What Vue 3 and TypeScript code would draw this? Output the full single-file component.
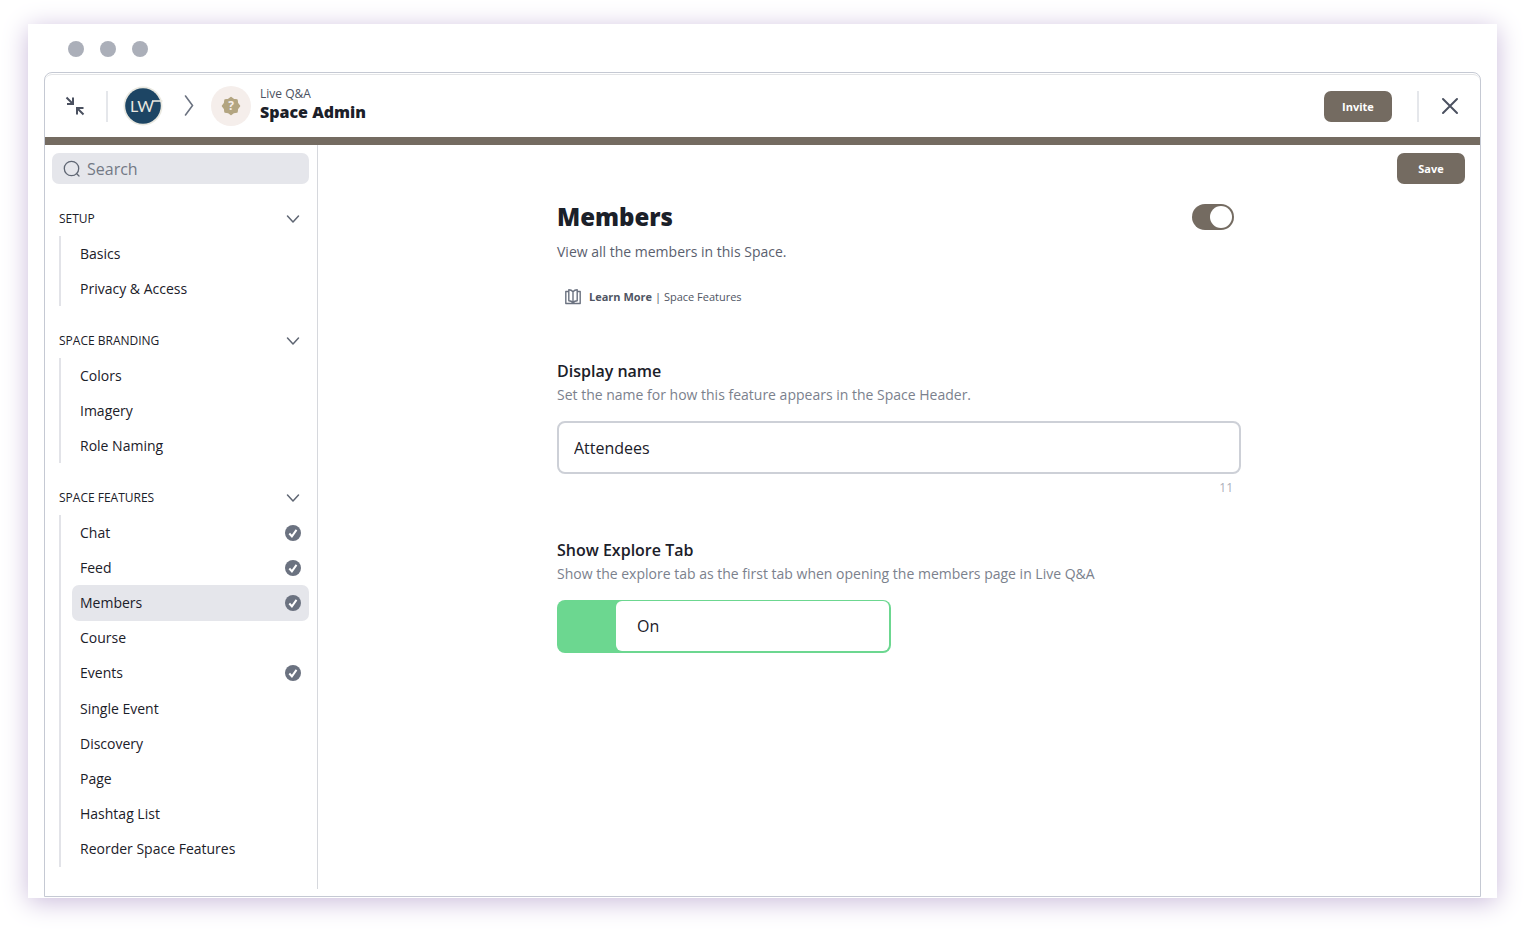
<script setup lang="ts">
import { ref } from 'vue'

interface Item {
  name: string
  enabled?: boolean
}
interface Group {
  title: string
  long?: boolean
  items: Item[]
}

const groups: Group[] = [
  { title: 'SETUP', items: [{ name: 'Basics' }, { name: 'Privacy & Access' }] },
  { title: 'SPACE BRANDING', items: [{ name: 'Colors' }, { name: 'Imagery' }, { name: 'Role Naming' }] },
  {
    title: 'SPACE FEATURES',
    long: true,
    items: [
      { name: 'Chat', enabled: true },
      { name: 'Feed', enabled: true },
      { name: 'Members', enabled: true },
      { name: 'Course' },
      { name: 'Events', enabled: true },
      { name: 'Single Event' },
      { name: 'Discovery' },
      { name: 'Page' },
      { name: 'Hashtag List' },
      { name: 'Reorder Space Features' },
    ],
  },
]

const active = ref('Members')
const closed = ref<string[]>([])
const search = ref('')
const displayName = ref('Attendees')
const featureOn = ref(true)
const exploreOn = ref(true)

function toggleGroup(title: string) {
  closed.value = closed.value.includes(title)
    ? closed.value.filter((t) => t !== title)
    : [...closed.value, title]
}
</script>

<template>
  <div class="window">
    <div class="dots"><span></span><span></span><span></span></div>
    <div class="frame">
      <header class="header">
        <button class="icon-button" type="button" aria-label="Collapse">
          <svg width="20" height="20" viewBox="0 0 20 20" fill="none" stroke="#4b5160" stroke-width="2">
            <path d="M1.5 1.5 7.5 7.5M8 1.500V8H2M18.500 18.500 12.500 12.500M12 18.500V12H18.500" />
          </svg>
        </button>
        <span class="divider"></span>
        <a class="logo" href="#" aria-label="Home">
          <svg width="40" height="40" viewBox="0 0 40 40">
            <circle cx="20" cy="20" r="19.500" fill="#e9e8e0" />
            <circle cx="20" cy="20" r="17.800" fill="#1d4564" />
            <text class="logo-text" x="7" y="26">LW</text>
            <path d="M29 15H39.500" fill="none" stroke="#e9e8e0" stroke-width="1.600" />
          </svg>
        </a>
        <svg class="crumb" width="12" height="24" viewBox="0 0 12 24" fill="none" stroke="#6b7280" stroke-width="1.600" stroke-linecap="round">
          <path d="M2.500 2 9.500 11.500 2.500 21" />
        </svg>
        <span class="space-icon">
          <svg width="20" height="20" viewBox="0 0 20 20">
            <path fill="#b3a581" stroke="#b3a581" stroke-width="1.500" stroke-linejoin="round" d="M10 1.500 12.700 3.600 16 4 16.400 7.300 18.500 10 16.400 12.700 16 16 12.700 16.400 10 18.500 7.300 16.400 4 16 3.600 12.700 1.500 10 3.600 7.300 4 4 7.300 3.600Z" />
            <text class="badge-text" x="10" y="14" text-anchor="middle">?</text>
          </svg>
        </span>
        <div class="titles">
          <span class="space-name">Live Q&amp;A</span>
          <h1>Space Admin</h1>
        </div>
        <button class="primary invite" type="button">Invite</button>
        <span class="divider"></span>
        <button class="icon-button close" type="button" aria-label="Close">
          <svg width="18" height="18" viewBox="0 0 18 18" fill="none" stroke="#4b5160" stroke-width="2" stroke-linecap="round">
            <path d="M2 2 16 16M16 2 2 16" />
          </svg>
        </button>
      </header>

      <div class="body">
        <nav class="sidebar" aria-label="Space settings">
          <label class="search">
            <svg width="18" height="18" viewBox="0 0 18 18" fill="none" stroke="#5f6673" stroke-width="1.300" stroke-linecap="round">
              <circle cx="8.500" cy="8.500" r="7.200" />
              <path d="M13.500 13.500 16 16" />
            </svg>
            <input v-model="search" type="text" placeholder="Search" aria-label="Search" />
          </label>
          <section v-for="g in groups" :key="g.title" class="group">
            <button class="group-title" type="button" @click="toggleGroup(g.title)">
              <span>{{ g.title }}</span>
              <svg width="14" height="10" viewBox="0 0 14 10" fill="none" stroke="#5f6673" stroke-width="1.500" stroke-linecap="round" stroke-linejoin="round">
                <path d="M1.500 2 7 8 12.500 2" />
              </svg>
            </button>
            <ul v-if="!closed.includes(g.title)" :class="{ long: g.long }">
              <li v-for="i in g.items" :key="i.name">
                <a href="#" :class="{ active: i.name === active }" @click.prevent="active = i.name">
                  <span>{{ i.name }}</span>
                  <svg v-if="i.enabled" width="16" height="16" viewBox="0 0 16 16">
                    <circle cx="8" cy="8" r="8" fill="#6b7280" />
                    <path d="M4.300 8.500 6.900 11.300 11.500 4.900" fill="none" stroke="#fff" stroke-width="2" />
                  </svg>
                </a>
              </li>
            </ul>
          </section>
        </nav>

        <main class="main">
          <div class="toolbar"><button class="primary" type="button">Save</button></div>
          <div class="content">
            <div class="heading">
              <h2>Members</h2>
              <input v-model="featureOn" class="switch" type="checkbox" aria-label="Enable Members" />
            </div>
            <p class="intro">View all the members in this Space.</p>
            <a class="learn" href="#">
              <svg width="16" height="16" viewBox="0 0 16 16" fill="none" stroke="#6b7280" stroke-width="1.400" stroke-linejoin="round">
                <path d="M8 2.800C7 1.500 5.500 .8 3.800 .8V11.800C5.500 11.800 7 12.500 8 13.800 9 12.500 10.500 11.800 12.200 11.800V.8C10.500 .8 9 1.500 8 2.800ZM8 2.800V13.800M3.800 2.500H.8V14.500H15.200V2.500H12.200" />
              </svg>
              <span><b>Learn More</b> | Space Features</span>
            </a>

            <div class="field">
              <label class="label" for="display-name">Display name</label>
              <p class="hint">Set the name for how this feature appears in the Space Header.</p>
              <input id="display-name" v-model="displayName" class="text-input" type="text" maxlength="20" />
              <span class="count">{{ 20 - displayName.length }}</span>
            </div>

            <div class="field">
              <span id="explore-label" class="label">Show Explore Tab</span>
              <p class="hint">Show the explore tab as the first tab when opening the members page in Live Q&amp;A</p>
              <label class="explore" :class="{ off: !exploreOn }">
                <input v-model="exploreOn" type="checkbox" aria-labelledby="explore-label" />
                <span class="explore-value">{{ exploreOn ? 'On' : 'Off' }}</span>
              </label>
            </div>
          </div>
        </main>
      </div>
    </div>
  </div>
</template>

<style>
body {
  background: #fff;
}
</style>

<style scoped>
* {
  box-sizing: border-box;
}
.window {
  margin: 24px 28px 32px;
  padding: 17px 16px 1px;
  background: #fff;
  box-shadow: 0 4px 24px #cabbdb;
  color: #1b2029;
  font-family: 'Open Sans', 'Noto Sans', sans-serif;
  font-size: 14px;
  line-height: 20px;
}
button,
input {
  font-family: inherit;
  color: inherit;
}
button {
  padding: 0;
  border: 0;
  background: none;
}
a {
  color: inherit;
  text-decoration: none;
}
h1,
h2,
p,
ul {
  margin: 0;
  padding: 0;
}
svg {
  flex: none;
  display: block;
}
.dots {
  display: flex;
  gap: 16px;
  padding: 0 24px;
  margin-bottom: 15px;
}
.dots span {
  width: 16px;
  height: 16px;
  border-radius: 50%;
  background: #abafb9;
}
.frame {
  border: 1px solid #c5c9d3;
  border-radius: 8px 8px 0 0;
}
.header {
  display: flex;
  align-items: center;
  height: 71px;
  margin-top: 1px;
  padding: 0 20px;
  border-top: 1px solid #e3e4e6;
  border-bottom: 8px solid #746b61;
  border-radius: 7px 7px 0 0;
}
.divider {
  width: 2px;
  height: 31px;
  background: #e5e7eb;
}
.header .icon-button {
  margin-right: 21px;
}
.logo {
  margin: 0 20px 0 15px;
}
.logo-text {
  font: 400 16px Lato, sans-serif;
  fill: #e9e8e0;
}
.space-icon {
  display: grid;
  place-items: center;
  width: 40px;
  height: 40px;
  margin: 0 9px 0 16px;
  border-radius: 50%;
  background: #f5eeeb;
}
.badge-text {
  font: 700 12px 'Open Sans', sans-serif;
  fill: #f5eeeb;
}
.titles {
  flex: 1;
  margin-bottom: 4px;
}
.space-name {
  display: block;
  color: #4b5160;
  font-size: 12px;
  line-height: 16px;
}
h1 {
  font-size: 16px;
  line-height: 20px;
  font-weight: 800;
}
.primary {
  width: 68px;
  height: 31px;
  border-radius: 7px;
  background: #746b61;
  color: #fff;
  font-size: 11px;
  font-weight: 700;
}
.invite {
  margin-right: 25px;
}
.header .close {
  margin: 0 1px 0 22px;
}
.body {
  display: flex;
}
.sidebar {
  flex: none;
  width: 273px;
  margin-bottom: 7px;
  padding: 8px 8px 22px 7px;
  border-right: 1px solid #d6d8dd;
}
.search {
  display: flex;
  align-items: center;
  gap: 6px;
  height: 31px;
  margin-bottom: 17px;
  padding: 0 11px;
  border-radius: 7px;
  background: #e5e6eb;
}
.search input {
  flex: 1;
  min-width: 0;
  padding: 0;
  border: 0;
  outline: 0;
  background: none;
  font-size: 16px;
}
.search input::placeholder {
  color: #737985;
  opacity: 1;
}
.group + .group {
  margin-top: 17px;
}
.group-title {
  display: flex;
  align-items: center;
  justify-content: space-between;
  width: 100%;
  height: 35px;
  padding: 0 9px 0 7px;
  font-size: 12px;
}
.group ul {
  display: grid;
  margin-left: 7px;
  padding-left: 11px;
  border-left: 2px solid #e2e3e8;
  list-style: none;
}
.group .long {
  min-height: 352px;
}
.group li {
  display: flex;
  min-height: 35px;
}
.group a {
  flex: 1;
  display: flex;
  align-items: center;
  justify-content: space-between;
  padding: 0 8px;
  border-radius: 7px;
}
.group .active {
  background: #e5e6eb;
}
.main {
  flex: 1;
  padding: 8px 15px;
}
.toolbar {
  display: flex;
  justify-content: flex-end;
}
.content {
  max-width: 684px;
  margin: 15px auto 0;
}
.heading {
  display: flex;
  align-items: center;
  justify-content: space-between;
  height: 36px;
  padding-right: 7px;
}
h2 {
  font-size: 24px;
  line-height: 36px;
  font-weight: 800;
}
.switch {
  appearance: none;
  display: flex;
  width: 42px;
  height: 26px;
  margin: 0;
  padding: 2px;
  border-radius: 13px;
  background: #abafb9;
}
.switch::before {
  content: '';
  width: 22px;
  height: 22px;
  border-radius: 50%;
  background: #fff;
}
.switch:checked {
  justify-content: flex-end;
  background: #746b61;
}
.intro {
  margin-top: 7px;
  color: #5a606e;
}
.learn {
  display: flex;
  align-items: center;
  gap: 8px;
  width: fit-content;
  margin: 25px 8px 0;
  color: #4f5563;
  font-size: 11px;
}
.field {
  margin-top: 42px;
}
.learn + .field {
  margin-top: 54px;
}
.label {
  display: block;
  font-size: 16px;
  line-height: 20px;
  font-weight: 600;
}
.hint {
  margin: 4px 0 16px;
  color: #7b818d;
}
.text-input {
  display: block;
  width: 100%;
  height: 53px;
  padding: 0 15px;
  border: 2px solid #cdd0d7;
  border-radius: 8px;
  font-size: 16px;
}
.count {
  display: block;
  margin: 4px 8px 0 0;
  color: #abafb9;
  font-size: 12px;
  text-align: right;
}
.explore {
  display: flex;
  width: 334px;
  height: 53px;
  padding: 1px 2px 2px 59px;
  border-radius: 8px;
  background: #6cd790;
}
.explore.off {
  background: #cdd0d7;
}
.explore input {
  position: absolute;
  opacity: 0;
}
.explore-value {
  flex: 1;
  padding-left: 21px;
  border-radius: 6px;
  background: #fff;
  font-size: 16px;
  line-height: 50px;
}
</style>
